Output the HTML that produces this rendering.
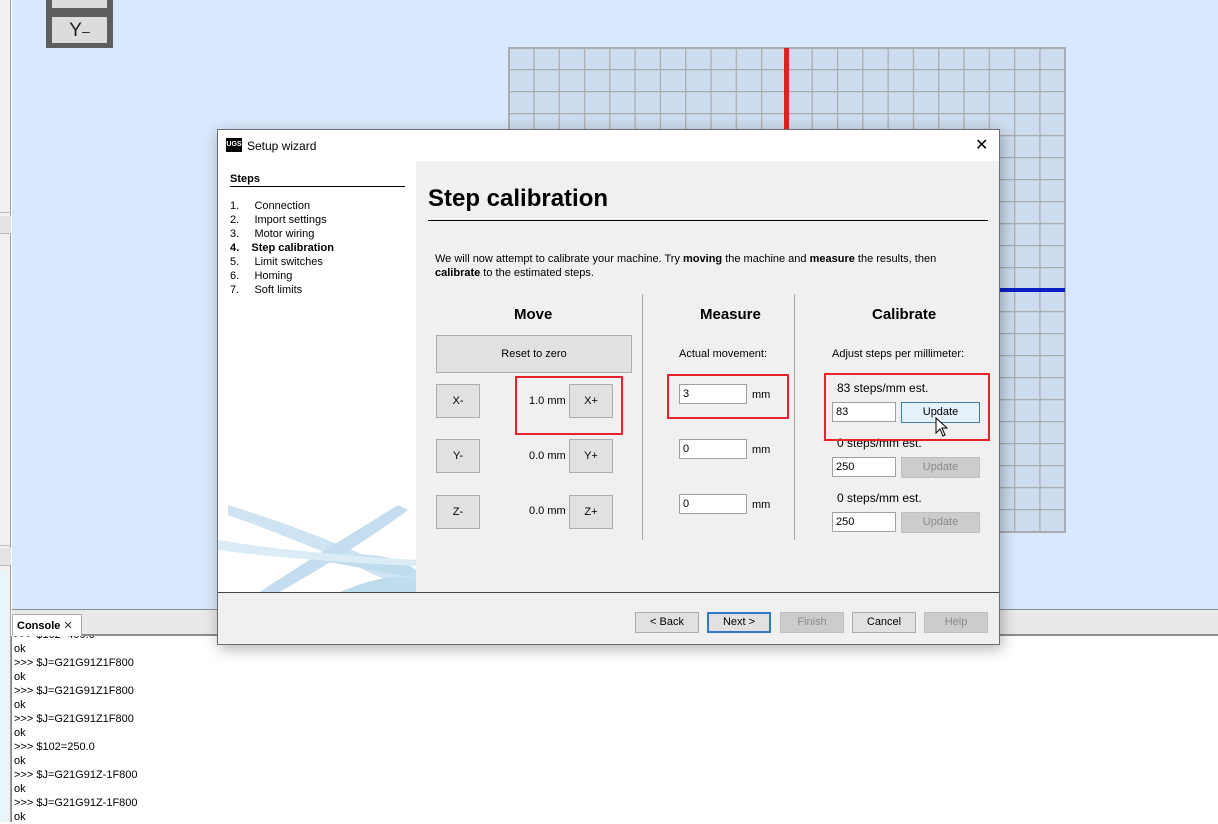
<!DOCTYPE html>
<html><head><meta charset="utf-8"><style>
*{box-sizing:border-box;margin:0;padding:0}
body{width:1218px;height:822px;overflow:hidden;position:relative;background:#fff;font-family:"Liberation Sans",sans-serif;font-size:11px;color:#000}
.a{position:absolute}
.btn{position:absolute;background:#e1e1e1;border:1px solid #adadad;text-align:center;font-size:11px;color:#000}
.inp{position:absolute;background:#fff;border:1px solid #a0a0a0;font-size:11px;padding:0 3px;height:20px;line-height:18px}
.dis{background:#cccccc;border-color:#bfbfbf;color:#8a8a8a}
.red{position:absolute;border:2px solid #e8212b}
</style></head><body>
<div class="a" style="left:14px;top:628px;font-size:11px;line-height:14px;white-space:pre">&gt;&gt;&gt; $102=400.0
ok
&gt;&gt;&gt; $J=G21G91Z1F800
ok
&gt;&gt;&gt; $J=G21G91Z1F800
ok
&gt;&gt;&gt; $J=G21G91Z1F800
ok
&gt;&gt;&gt; $102=250.0
ok
&gt;&gt;&gt; $J=G21G91Z-1F800
ok
&gt;&gt;&gt; $J=G21G91Z-1F800
ok</div>
<!-- left strip -->
<div class="a" style="left:0;top:0;width:11px;height:822px;background:#f0f0f0;border-right:1px solid #a0a0a0"></div>
<div class="a" style="left:0;top:212px;width:11px;height:1px;background:#bbb"></div>
<div class="a" style="left:0;top:216px;width:11px;height:18px;background:#e4e4e4;border-bottom:1px solid #bbb"></div>
<div class="a" style="left:0;top:545px;width:11px;height:1px;background:#bbb"></div>
<div class="a" style="left:0;top:548px;width:11px;height:18px;background:#e4e4e4;border-bottom:1px solid #bbb"></div>
<div class="a" style="left:0;top:570px;width:7px;height:252px;background:#e6f6fb"></div>
<!-- canvas -->
<div class="a" style="left:12px;top:0;width:1206px;height:609px;background:#d9e8fc"></div>
<div class="a" style="left:46px;top:0;width:67px;height:48px;background:#5e5e5e"></div>
<div class="a" style="left:52px;top:0;width:55px;height:8px;background:#dcdcdc"></div>
<div class="a" style="left:52px;top:17px;width:55px;height:26px;background:#dcdcdc;font-size:19px;text-align:center;line-height:28px;color:#222">Y<span style="font-size:14px">–</span></div>
<svg class="a" style="left:508px;top:47px" width="559" height="487">
<defs><pattern id="g" width="25.3" height="22" patternUnits="userSpaceOnUse"><rect width="25.3" height="22" fill="#cddcee"/><path d="M0 0H25.3M0 0V22" stroke="#a9acb0" stroke-width="2.5" fill="none"/></pattern></defs>
<rect x="0" y="0" width="557" height="485" fill="url(#g)"/>
<rect x="1" y="1" width="556" height="484" fill="none" stroke="#a9acb0" stroke-width="2"/>
<rect x="276" y="1" width="5" height="484" fill="#d9261c"/>
<rect x="300" y="241" width="257" height="4" fill="#0a1fc4"/>
</svg>
<!-- bottom tab area -->
<div class="a" style="left:12px;top:609px;width:1206px;height:27px;background:#e9e9e9;border-top:1px solid #8c8c8c;border-bottom:2px solid #8c8c8c"></div>
<div class="a" style="left:12px;top:614px;width:70px;height:22px;background:#fff;border:1px solid #aaa;border-bottom:none;font-weight:bold;font-size:11px;padding:4px 0 0 4px">Console <span style="font-weight:normal;color:#333">✕</span></div>
<div class="a" style="left:11px;top:636px;width:1px;height:186px;background:#888"></div>
<!-- dialog -->
<div class="a" style="left:217px;top:129px;width:783px;height:516px;background:#fff;border:1px solid #6d6d6d;box-shadow:2px 4px 14px rgba(0,0,0,.3)">
 <div class="a" style="left:8px;top:8px;width:16px;height:14px;background:#000;color:#fff;font-size:7px;font-weight:bold;line-height:14px;text-align:center">UGS</div>
 <div class="a" style="left:29px;top:9px;font-size:12px">Setup wizard</div>
 <div class="a" style="left:757px;top:5px;font-size:16px;font-weight:300">✕</div>
 <div class="a" style="left:12px;top:43px;font-weight:bold;font-size:11px">Steps</div>
 <div class="a" style="left:12px;top:56px;width:175px;height:1px;background:#000"></div>
 <div class="a" style="left:12px;top:69px;line-height:14px;font-size:11px">
  <div>1.&nbsp;&nbsp;&nbsp;&nbsp;&nbsp;Connection</div><div>2.&nbsp;&nbsp;&nbsp;&nbsp;&nbsp;Import settings</div><div>3.&nbsp;&nbsp;&nbsp;&nbsp;&nbsp;Motor wiring</div><div style="font-weight:bold">4.&nbsp;&nbsp;&nbsp;&nbsp;Step calibration</div><div>5.&nbsp;&nbsp;&nbsp;&nbsp;&nbsp;Limit switches</div><div>6.&nbsp;&nbsp;&nbsp;&nbsp;&nbsp;Homing</div><div>7.&nbsp;&nbsp;&nbsp;&nbsp;&nbsp;Soft limits</div>
 </div>
 <svg class="a" style="left:0;top:370px" width="198" height="93"><path d="M10 15 C80 40 150 70 198 95 L198 80 C150 55 90 30 10 5Z" fill="#cfe4f2"/><path d="M40 93 C90 60 140 30 180 5 L190 10 C150 40 100 70 60 93Z" fill="#c4def0"/><path d="M100 60 C140 50 180 55 198 70 L198 93 L120 93 C150 80 170 75 198 78" fill="#bfdced"/><path d="M0 40 C60 50 120 55 198 60 L198 66 C120 62 60 58 0 50Z" fill="#dcecf6"/></svg>
 <div class="a" style="left:198px;top:31px;width:583px;height:432px;background:#f0f0f0"></div>
 <div class="a" style="left:210px;top:55px;font-size:24px;font-weight:bold">Step calibration</div>
 <div class="a" style="left:210px;top:90px;width:560px;height:1px;background:#000"></div>
 <div class="a" style="left:217px;top:122px;font-size:11px;line-height:14px">We will now attempt to calibrate your machine. Try <b>moving</b> the machine and <b>measure</b> the results, then<br><b>calibrate</b> to the estimated steps.</div>
 <div class="a" style="left:424px;top:164px;width:1px;height:246px;background:#a8a8a8"></div>
 <div class="a" style="left:576px;top:164px;width:1px;height:246px;background:#a8a8a8"></div>
 <div class="a" style="left:296px;top:176px;font-size:15px;font-weight:bold">Move</div>
 <div class="a" style="left:482px;top:176px;font-size:15px;font-weight:bold">Measure</div>
 <div class="a" style="left:654px;top:176px;font-size:15px;font-weight:bold">Calibrate</div>
 <div class="btn" style="left:218px;top:205px;width:196px;height:38px;line-height:36px">Reset to zero</div>
 <div class="btn" style="left:218px;top:254px;width:44px;height:34px;line-height:32px">X-</div>
 <div class="btn" style="left:351px;top:254px;width:44px;height:34px;line-height:32px">X+</div>
 <div class="a" style="left:311px;top:265px">1.0 mm</div>
 <div class="btn" style="left:218px;top:309px;width:44px;height:34px;line-height:32px">Y-</div>
 <div class="btn" style="left:351px;top:309px;width:44px;height:34px;line-height:32px">Y+</div>
 <div class="a" style="left:311px;top:320px">0.0 mm</div>
 <div class="btn" style="left:218px;top:365px;width:44px;height:34px;line-height:32px">Z-</div>
 <div class="btn" style="left:351px;top:365px;width:44px;height:34px;line-height:32px">Z+</div>
 <div class="a" style="left:311px;top:375px">0.0 mm</div>
 <div class="red" style="left:297px;top:246px;width:108px;height:59px"></div>
 <div class="a" style="left:461px;top:218px">Actual movement:</div>
 <div class="inp" style="left:461px;top:254px;width:68px">3</div><div class="a" style="left:534px;top:259px">mm</div>
 <div class="inp" style="left:461px;top:309px;width:68px">0</div><div class="a" style="left:534px;top:314px">mm</div>
 <div class="inp" style="left:461px;top:364px;width:68px">0</div><div class="a" style="left:534px;top:369px">mm</div>
 <div class="red" style="left:449px;top:244px;width:122px;height:45px"></div>
 <div class="a" style="left:614px;top:218px">Adjust steps per millimeter:</div>
 <div class="a" style="left:619px;top:251px;font-size:12px">83 steps/mm est.</div>
 <div class="inp" style="left:614px;top:272px;width:64px">83</div>
 <div class="btn" style="left:683px;top:272px;width:79px;height:21px;line-height:19px;background:#e5f1fb;border-color:#3c7fb1">Update</div>
 <div class="a" style="left:619px;top:306px;font-size:12px">0 steps/mm est.</div>
 <div class="inp" style="left:614px;top:327px;width:64px">250</div>
 <div class="btn dis" style="left:683px;top:327px;width:79px;height:21px;line-height:19px">Update</div>
 <div class="a" style="left:619px;top:361px;font-size:12px">0 steps/mm est.</div>
 <div class="inp" style="left:614px;top:382px;width:64px">250</div>
 <div class="btn dis" style="left:683px;top:382px;width:79px;height:21px;line-height:19px">Update</div>
 <div class="red" style="left:606px;top:243px;width:166px;height:68px"></div>
 <svg class="a" style="left:717px;top:287px" width="14" height="22"><path d="M1 1 L1 16 L5 12 L8 19 L10 18 L7 11 L12 11 Z" fill="#fff" stroke="#000" stroke-width="1"/></svg>
 <div class="a" style="left:0;top:462px;width:781px;height:1px;background:#444"></div>
 <div class="a" style="left:0;top:463px;width:781px;height:51px;background:#f0f0f0"></div>
 <div class="btn" style="left:417px;top:482px;width:64px;height:21px;line-height:19px">&lt; Back</div>
 <div class="btn" style="left:489px;top:482px;width:64px;height:21px;border:2px solid #2f79c9;line-height:17px">Next &gt;</div>
 <div class="btn dis" style="left:562px;top:482px;width:64px;height:21px;line-height:19px">Finish</div>
 <div class="btn" style="left:634px;top:482px;width:64px;height:21px;line-height:19px">Cancel</div>
 <div class="btn dis" style="left:706px;top:482px;width:64px;height:21px;line-height:19px">Help</div>
</div>
</body></html>
